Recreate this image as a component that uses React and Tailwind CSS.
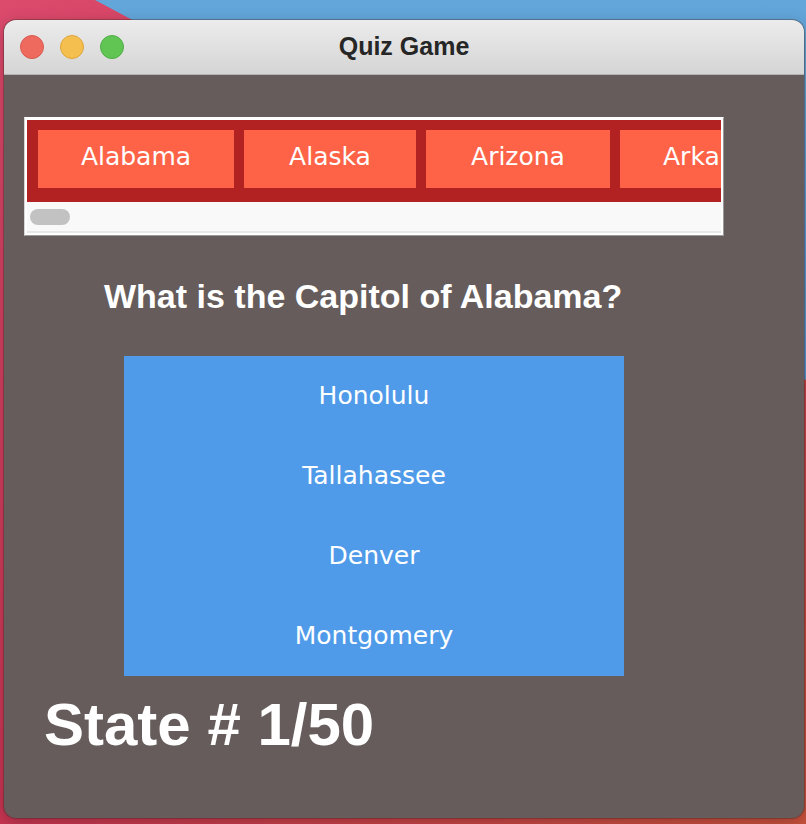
import React from 'react';

const tabs = [
  { name: 'Alabama', w: 'w-[196px]' },
  { name: 'Alaska', w: 'w-[172px]' },
  { name: 'Arizona', w: 'w-[184px]' },
  { name: 'Arkansas', w: 'w-[200px]' },
  { name: 'California', w: 'w-[220px]' },
];

const answers = ['Honolulu', 'Tallahassee', 'Denver', 'Montgomery'];

// desktop wallpaper behind the window
function Wallpaper() {
  return (
    <svg className="absolute inset-0" width="806" height="824" viewBox="0 0 806 824">
      <defs>
        <linearGradient id="red" x1="0" y1="0" x2="1" y2="1">
          <stop offset="0" stopColor="#dc4a6c" />
          <stop offset="0.5" stopColor="#c83552" />
          <stop offset="1" stopColor="#c8523c" />
        </linearGradient>
        <linearGradient id="blue" x1="0" y1="0" x2="0" y2="1">
          <stop offset="0" stopColor="#63a6da" />
          <stop offset="1" stopColor="#5696cc" />
        </linearGradient>
      </defs>
      <rect width="806" height="824" fill="url(#red)" />
      <polygon points="95,0 806,0 806,380" fill="url(#blue)" />
    </svg>
  );
}

function TrafficLights() {
  return (
    <div className="flex items-center gap-[16px]">
      <span className="w-[24px] h-[24px] rounded-full bg-[#ee6a5f] border border-[#d85a50]" />
      <span className="w-[24px] h-[24px] rounded-full bg-[#f5bf4f] border border-[#dea63c]" />
      <span className="w-[24px] h-[24px] rounded-full bg-[#61c554] border border-[#4fae44]" />
    </div>
  );
}

export default function App() {
  return (
    <div className="relative w-[806px] h-[824px] overflow-hidden">
      <Wallpaper />

      <div className="relative pl-[4px] pt-[20px]">
        <div className="w-[800px] h-[798px] rounded-[12px] overflow-hidden bg-[#655c5b] flex flex-col shadow-[0_0_0_1px_rgba(60,40,40,0.35),0_4px_16px_rgba(0,0,0,0.25)]">
          {/* Title bar */}
          <div className="relative h-[55px] shrink-0 bg-gradient-to-b from-[#ececec] to-[#d5d5d5] border-b border-[#b4b4b4] flex items-center pl-[16px]">
            <TrafficLights />
            <div className="absolute inset-0 flex items-center justify-center font-['Liberation_Sans',Arial,sans-serif] font-bold text-[25px] text-[#262626]">
              Quiz Game
            </div>
          </div>

          {/* Content */}
          <div className="flex flex-col">
            {/* Tab strip with scrollbar */}
            <div className="ml-[20px] mt-[42px] w-[700px] border border-t-white border-l-[#d6d6d6] border-r-[#9a9a9a] border-b-[#9a9a9a] p-[2px] bg-white">
              <div className="h-[82px] bg-[#b22222] flex gap-[10px] pl-[11px] pt-[10px] pb-[14px] overflow-hidden">
                {tabs.map((t) => (
                  <div
                    key={t.name}
                    className={`${t.w} shrink-0 bg-[#ff6347] flex items-center justify-center pb-[4px] text-white text-[25px] font-['DejaVu_Sans',Verdana,sans-serif]`}
                  >
                    {t.name}
                  </div>
                ))}
              </div>
              <div className="h-[31px] bg-[#f9f9f9] border-b-2 border-[#e7e7e7] pl-[3px] pt-[7px]">
                <div className="w-[40px] h-[16px] rounded-full bg-[#c2c2c2]" />
              </div>
            </div>

            {/* Question */}
            <div className="ml-[100px] mt-[43px] h-[34px] leading-none text-[34px] font-bold text-white font-['Liberation_Sans',Arial,sans-serif]">
              What is the Capitol of Alabama?
            </div>

            {/* Answers */}
            <div className="ml-[120px] mt-[43px] w-[500px] bg-[#4f9be9] flex flex-col">
              {answers.map((a) => (
                <div
                  key={a}
                  className="h-[80px] flex items-center justify-center text-white text-[25px] font-['DejaVu_Sans',Verdana,sans-serif]"
                >
                  {a}
                </div>
              ))}
            </div>

            {/* Counter */}
            <div className="ml-[40px] mt-[19px] h-[60px] leading-none text-[60px] font-bold text-white font-['Liberation_Sans',Arial,sans-serif]">
              State # 1/50
            </div>
          </div>
        </div>
      </div>
    </div>
  );
}
